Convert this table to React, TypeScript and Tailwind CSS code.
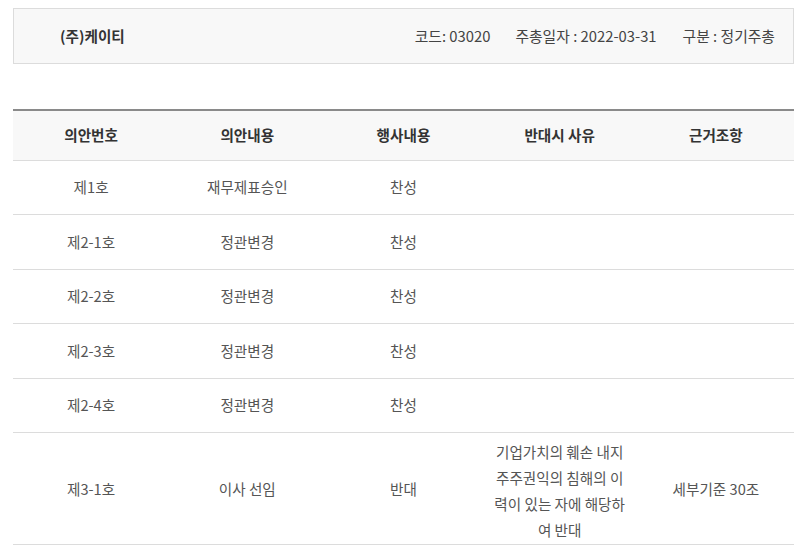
import React from "react";

const rows: { no: string; content: string; act: string; reason?: string[]; basis?: string }[] = [
  { no: "제1호", content: "재무제표승인", act: "찬성" },
  { no: "제2-1호", content: "정관변경", act: "찬성" },
  { no: "제2-2호", content: "정관변경", act: "찬성" },
  { no: "제2-3호", content: "정관변경", act: "찬성" },
  { no: "제2-4호", content: "정관변경", act: "찬성" },
  {
    no: "제3-1호",
    content: "이사 선임",
    act: "반대",
    reason: ["기업가치의 훼손 내지", "주주권익의 침해의 이", "력이 있는 자에 해당하", "여 반대"],
    basis: "세부기준 30조",
  },
];

export default function App() {
  return (
    <div
      className="w-[800px] h-[556px] overflow-hidden bg-white text-[#333]"
      style={{ fontFamily: '"Noto Sans CJK KR", "Noto Sans", sans-serif' }}
    >
      <div className="ml-[13px] mt-[8px] w-[781px] h-[56px] border border-[#dcdcdc] bg-[#f8f8f8] flex items-center">
        <div className="pl-[46px] text-[14.6px] font-bold text-[#333]">(주)케이티</div>
        <div className="ml-auto flex items-center text-[14.8px] text-[#444] pr-[18px]">
          <span>코드: 03020</span>
          <span className="ml-[25px]">주총일자 : 2022-03-31</span>
          <span className="ml-[26px]">구분 : 정기주총</span>
        </div>
      </div>

      <table className="ml-[13px] mt-[45px] w-[781px] border-collapse table-fixed text-[14.6px]">
        <thead>
          <tr className="bg-[#f8f8f8] border-t-2 border-[#8a8a8a] border-b border-b-[#dcdcdc] h-[50px]">
            <th className="font-bold text-[#333]">의안번호</th>
            <th className="font-bold text-[#333]">의안내용</th>
            <th className="font-bold text-[#333]">행사내용</th>
            <th className="font-bold text-[#333]">반대시 사유</th>
            <th className="font-bold text-[#333]">근거조항</th>
          </tr>
        </thead>
        <tbody>
          {rows.map((r) => (
            <tr key={r.no} className="border-b border-[#dcdcdc] h-[54.5px] text-[#555] text-center align-middle">
              <td>{r.no}</td>
              <td>{r.content}</td>
              <td>{r.act}</td>
              <td className="pt-[5.5px] pb-[1.5px] leading-[26px]">
                {r.reason?.map((l) => (
                  <div key={l}>{l}</div>
                ))}
              </td>
              <td>{r.basis}</td>
            </tr>
          ))}
        </tbody>
      </table>
    </div>
  );
}
